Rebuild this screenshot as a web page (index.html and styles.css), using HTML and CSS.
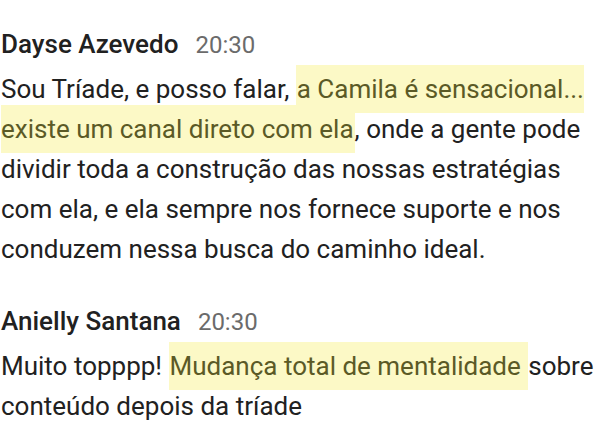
FILE: index.html
```html
<!DOCTYPE html>
<html lang="pt">
<head>
<meta charset="utf-8">
<link rel="stylesheet" href="styles.css">
</head>
<body>
<div class="feed">
  <div class="msg">
    <div class="head"><span class="name">Dayse Azevedo</span><span class="time">20:30</span></div>
    <p class="text">Sou Tríade, e posso falar, <mark class="hl">a Camila é sensacional... existe um canal direto com ela</mark>, onde a gente pode dividir toda a construção das nossas estratégias com ela, e ela sempre nos fornece suporte e nos conduzem nessa busca do caminho ideal.</p>
  </div>
  <div class="msg">
    <div class="head"><span class="name">Anielly Santana</span><span class="time">20:30</span></div>
    <p class="text">Muito topppp! <mark class="hl">Mudança total de mentalidade </mark>sobre conteúdo depois da tríade</p>
  </div>
</div>
</body>
</html>
```
FILE: styles.css
```css
html, body {
  margin: 0;
  padding: 0;
  background: #ffffff;
}
body {
  font-family: Roboto, "Noto Sans", sans-serif;
  color: #212121;
  width: 616px;
  height: 444px;
  overflow: hidden;
}
.feed {
  display: flex;
  flex-direction: column;
  gap: 32px;
  padding: 24px 0 0 1px;
}
.msg {
  display: flex;
  flex-direction: column;
  gap: 4px;
}
.head {
  display: flex;
  align-items: baseline;
  gap: 17px;
  line-height: 40px;
}
.name {
  font-size: 26px;
  font-weight: 500;
  color: #212121;
}
.time {
  font-size: 24px;
  color: #6b6b6b;
}
.text {
  margin: 0;
  font-size: 26px;
  line-height: 40px;
  width: 610px;
}
.hl {
  background: #fcf9c6;
  color: #5b5a26;
  padding: 9px 1px;
}
```
